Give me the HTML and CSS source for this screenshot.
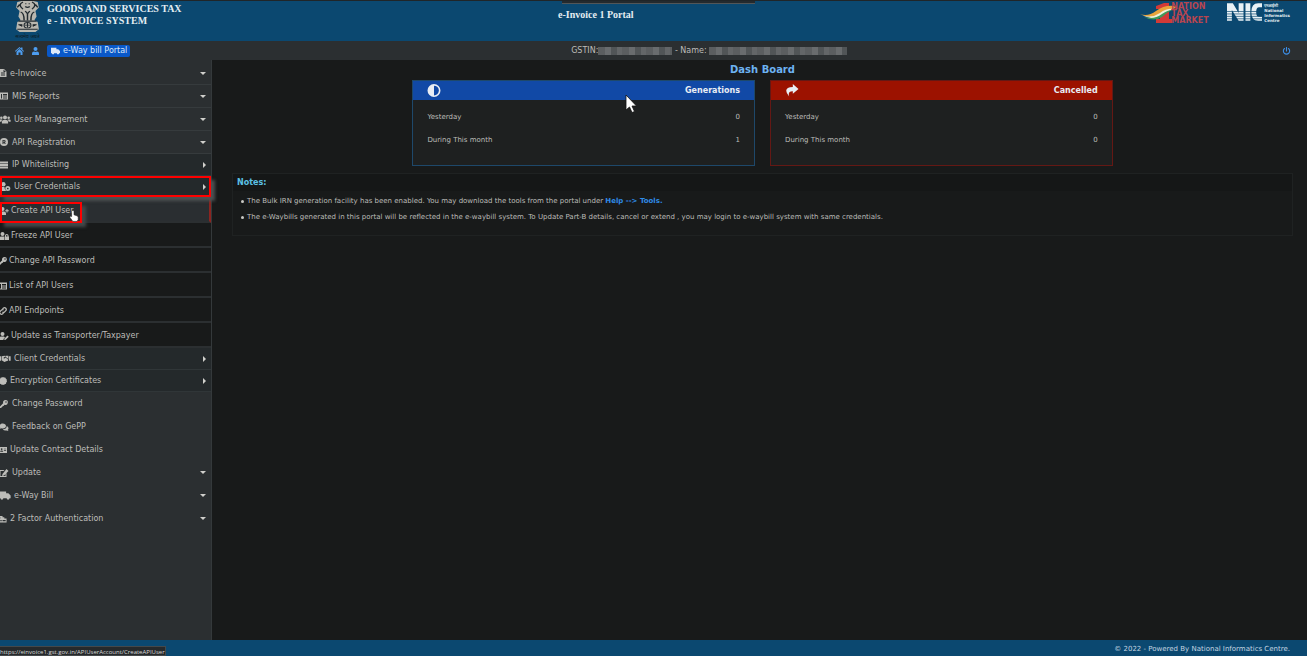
FILE: index.html
```html
<!DOCTYPE html>
<html lang="en">
<head>
    <meta charset="UTF-8">
    <meta name="viewport" content="width=device-width, initial-scale=1.0">
    <title>e-Invoice 1 Portal</title>
    <link rel="stylesheet" href="styles.css">
</head>
<body>
    <!-- icon set -->
    <svg class="icon-defs" aria-hidden="true">
        <symbol id="i-file" viewBox="0 0 16 16"><path fill-rule="evenodd" d="M1 0h9l5 5v11H1zM4 7v2h8V7zM4 11v2h8v-2zM9 1v5h5z"/></symbol>
        <symbol id="i-list" viewBox="0 0 16 16"><path fill-rule="evenodd" d="M0 1h16v14H0zM2 4v9h2V4zM6 4v2h8V4zM6 7v2h8V7zM6 11v2h8v-2z"/></symbol>
        <symbol id="i-users" viewBox="0 0 20 16"><circle cx="10" cy="4.500" r="3.500"/><circle cx="3.500" cy="5" r="2.300"/><circle cx="16.500" cy="5" r="2.300"/><path d="M4.500 15v-3q0-3 3-3h5q3 0 3 3v3zM0 12V9.500Q0 8 2 8h3.500Q3.500 10 3.500 12zM20 12V9.500Q20 8 18 8h-3.500q2 2 2 4z"/></symbol>
        <symbol id="i-reg" viewBox="0 0 16 16"><path fill-rule="evenodd" d="M8 0a8 8 0 1 1 0 16A8 8 0 0 1 8 0zM5 4v8h2V9.500h1L9.500 12h2L10 9q2-1 1-3.500Q10.500 4 8.500 4zM7 5.500h1.500q1.300 1.200 0 2.300H7z"/></symbol>
        <symbol id="i-server" viewBox="0 0 16 16"><path d="M0 1h16v4H0zM0 6h16v4H0zM0 11h16v4H0z"/></symbol>
        <symbol id="i-user-cog" viewBox="0 0 20 16"><circle cx="7" cy="4" r="4"/><path d="M0 16v-3q0-4 4-4h5q0 4 3 7z"/><path fill-rule="evenodd" d="M15 7a4.500 4.500 0 1 1 0 9 4.500 4.500 0 0 1 0-9zm0 3a1.500 1.500 0 1 0 0 3 1.500 1.500 0 0 0 0-3z"/></symbol>
        <symbol id="i-user-plus" viewBox="0 0 20 16"><circle cx="7" cy="4" r="4"/><path d="M0 16v-3q0-4 4-4h6q4 0 4 4v3zM15 4h2v2.500h2.500v2H17V11h-2V8.500h-2.500v-2H15z"/></symbol>
        <symbol id="i-user-lock" viewBox="0 0 20 16"><circle cx="7" cy="4" r="4"/><path d="M0 16v-3q0-4 4-4h6v7z"/><path fill-rule="evenodd" d="M11 9h1V7q0-3 3.500-3T19 7v2h1v7h-9zM14 9h3V7q-1.500-1.800-3 0z"/></symbol>
        <symbol id="i-key" viewBox="0 0 16 16"><path fill-rule="evenodd" d="M11 0a5 5 0 1 1-2 9.700L7 12H5v2H3v2H0v-3l6.300-6.300A5 5 0 0 1 11 0zm1 2.500a1.500 1.500 0 1 0 0 3 1.500 1.500 0 0 0 0-3z"/></symbol>
        <symbol id="i-link" viewBox="0 0 16 16"><g fill="none" stroke="currentColor" stroke-width="2.400"><path d="M7 4l2-2q2.500-1.500 4.500.5T14 7l-3 3q-2 1.500-4 0"/><path d="M9 12l-2 2q-2.500 1.500-4.500-.5T2 9l3-3q2-1.500 4 0"/></g></symbol>
        <symbol id="i-user-edit" viewBox="0 0 20 16"><circle cx="7" cy="4" r="4"/><path d="M0 16v-3q0-4 4-4h6l2 2-3 3v2zM11 13l6-6 2.500 2.500-6 6L10.500 16z"/></symbol>
        <symbol id="i-hands" viewBox="0 0 20 16"><path d="M0 4h3v8H0zM17 4h3v8h-3zM4 4l5-1 2 1-4 3q2 2 4-1l5 4-1 2-3 1-3 1-5-3zM11 3h5v6l-5-4z"/></symbol>
        <symbol id="i-cert" viewBox="0 0 16 16"><path d="M8 0l2 1 2.500 0 1 2.200L15.500 5v2.500L16 9l-1.500 2-.5 2.500-2.500.8L9.500 16 8 15l-2 1-1.700-1.700L2 13.500 1.500 11 0 9l.8-2L.5 4.700 2.700 3.200l1-2.200H6z"/></symbol>
        <symbol id="i-chat" viewBox="0 0 18 16"><path d="M6.500 1C10 1 13 3 13 6s-3 5-6.500 5Q5 11 3.500 10.500L0 12l1.500-3Q0 8 0 6c0-3 3-5 6.500-5zM14.500 6Q18 7.500 18 10.500q0 2-1.500 3L18 16l-4-1q-5 1-7.500-2.500Q14 12.500 14.500 6z"/></symbol>
        <symbol id="i-card" viewBox="0 0 18 16"><path fill-rule="evenodd" d="M0 1h18v14H0zM6 4a2 2 0 1 0 0 4 2 2 0 0 0 0-4zM2.500 12h7q0-3-3.500-3t-3.500 3zM11 5v1.500h5V5zM11 8v1.500h5V8z"/></symbol>
        <symbol id="i-edit" viewBox="0 0 18 16"><path d="M0 2h10L8 4H2v10h10v-4l2-2v8H0zM14 0l4 4-9 9-4 1 1-4z"/></symbol>
        <symbol id="i-truck" viewBox="0 0 20 16"><path d="M0 1h12v3h4l4 4v5h-2a2.500 2.500 0 0 1-5 0H7a2.500 2.500 0 0 1-5 0H0z"/></symbol>
        <symbol id="i-factor" viewBox="0 0 18 16"><path fill-rule="evenodd" d="M1 1h7v3h4v3h5v9H0V7h3V4H1zM3 10v3h3v-3zM8 10v3h7v-3z"/></symbol>
        <symbol id="i-home" viewBox="0 0 18 16"><path d="M9 0l3 2.700V1h3v4.300L18 8l-1 1.300-8-7-8 7L0 8zM9 4l6 5.300V16h-4v-5H7v5H3V9.300z"/></symbol>
        <symbol id="i-user" viewBox="0 0 16 16"><circle cx="8" cy="4" r="4"/><path d="M1 16v-3q0-4 4-4 3 1.500 6 0 4 0 4 4v3z"/></symbol>
        <symbol id="i-power" viewBox="0 0 16 16"><g fill="none" stroke="currentColor" stroke-width="2.200" stroke-linecap="round"><path d="M4 3a6.300 6.300 0 1 0 8 0M8 1v7"/></g></symbol>
        <symbol id="i-half" viewBox="0 0 16 16"><path fill-rule="evenodd" d="M8 0a8 8 0 1 1 0 16A8 8 0 0 1 8 0zm0 2v12A6 6 0 0 0 8 2z"/></symbol>
        <symbol id="i-share" viewBox="0 0 16 16"><path d="M9 0l7 6-7 6V8.800Q2.500 8.500 4.500 15.500-4.500 4.500 9 3.800z"/></symbol>
    </svg>

    <header class="topbar">
        <div class="window-tab"></div>
        <div class="brand">
            <div class="emblem">
                <svg viewBox="3 0 22 34" preserveAspectRatio="none" aria-hidden="true">
                    <path fill="#b9b7af" d="M5 1l4-1h10l4 1 1 6-3 4 1 6-2 4 3 2 1 8-3 3H7l-3-3 1-8 3-2-2-4 1-6-3-4z"/>
                    <path fill="none" stroke="#222b30" stroke-width="1.300" d="M10 1q-5 3 0 8M18 1q5 3 0 8M12 3h1M15 3h1M12 6q2 2 4 0M8 12q3 1 3 9M20 12q-3 1-3 9M12 11l2 3 2-3M14 14v7M6 22h16M5 31h18M7 4l-2 3M21 4l2 3"/>
                    <circle cx="14" cy="26.500" r="3" fill="none" stroke="#222b30"/>
                    <path stroke="#222b30" stroke-width="1" d="M14 24v5M11.500 26.500h5M6 26h3v2M19 28v-2h3"/>
                </svg>
                <span class="motto">सत्यमेव जयते</span>
            </div>
            <div class="brand-name">
                <div>GOODS AND SERVICES TAX</div>
                <div>e - INVOICE SYSTEM</div>
            </div>
        </div>
        <h1>e-Invoice 1 Portal</h1>
        <div class="logos">
            <div class="ntm">
                <svg viewBox="0 0 40 20" aria-hidden="true">
                    <path fill="#d23a37" d="M16 3l8-3h5v16h3v4H16v-4h4V6h-4z"/>
                    <path fill="#e9a43b" d="M0 11q8 3 16-3 8-6 18-5l3 2q-10 1-17 7-9 5-20-1z"/>
                    <path fill="#eef0dc" d="M2 12q9 4 18-2 7-5 14-4-7 2-13 7-9 5-19-1z"/>
                    <path fill="#3f9a58" d="M4 14q10 3 18-3 6-4 10-4-6 3-10 7-8 5-18 0z"/>
                </svg>
                <div class="ntm-text">NATION<br>TAX<br>MARKET</div>
            </div>
            <div class="nic">
                <svg viewBox="0 0 36 18" aria-hidden="true">
                    <path fill="#e9f1f5" d="M0 0h6l6 10V0h5v18h-5L5 7v11H0zM19 0h5v18h-5zM36 0v4h-3q-3 0-3 5t3 5h3v4h-4q-7 0-7-9t7-9z"/>
                    <path stroke="#0b4870" stroke-width="0.700" d="M0 8.500h36M0 11h36M0 13.500h36M0 16h36"/>
                </svg>
                <div class="nic-text"><span>एनआईसी</span><span>National</span><span>Informatics</span><span>Centre</span></div>
            </div>
        </div>
    </header>

    <nav class="toolbar">
        <div class="shortcuts">
            <a href="#" aria-label="Home"><svg class="ico"><use href="#i-home"/></svg></a>
            <a href="#" aria-label="User"><svg class="ico"><use href="#i-user"/></svg></a>
            <a href="#" class="portal-link"><svg class="ico"><use href="#i-truck"/></svg>e-Way bill Portal</a>
        </div>
        <div class="taxpayer">GSTIN:<span class="masked gstin"></span> - Name: <span class="masked name"></span></div>
        <a href="#" class="logout" aria-label="Logout"><svg class="ico"><use href="#i-power"/></svg></a>
    </nav>

    <div class="page">
        <aside>
            <ul class="menu">
                <li><a href="#" class="line down"><svg class="ico small"><use href="#i-file"/></svg>e-Invoice</a></li>
                <li><a href="#" class="line down"><svg class="ico medium"><use href="#i-list"/></svg>MIS Reports</a></li>
                <li><a href="#" class="line down"><svg class="ico large"><use href="#i-users"/></svg>User Management</a></li>
                <li><a href="#" class="line down"><svg class="ico medium"><use href="#i-reg"/></svg>API Registration</a></li>
                <li><a href="#" class="group right"><svg class="ico medium"><use href="#i-server"/></svg>IP Whitelisting</a></li>
                <li><a href="#" class="group right marked"><svg class="ico large"><use href="#i-user-cog"/></svg>User Credentials</a></li>
                <li><a href="#" class="sub current"><svg class="ico medium"><use href="#i-user-plus"/></svg>Create API User</a>
                    <svg class="hand" viewBox="0 0 16 20" aria-hidden="true"><path fill="#fff" stroke="#222" d="M5 1h2l1 1v6l6 2 1 2v4l-2 3H6L1 12l1-2 2 1V2z"/></svg>
                </li>
                <li><a href="#" class="sub"><svg class="ico medium"><use href="#i-user-lock"/></svg>Freeze API User</a></li>
                <li><a href="#" class="sub"><svg class="ico small"><use href="#i-key"/></svg>Change API Password</a></li>
                <li><a href="#" class="sub"><svg class="ico small"><use href="#i-list"/></svg>List of API Users</a></li>
                <li><a href="#" class="sub"><svg class="ico small"><use href="#i-link"/></svg>API Endpoints</a></li>
                <li><a href="#" class="sub"><svg class="ico medium"><use href="#i-user-edit"/></svg>Update as Transporter/Taxpayer</a></li>
                <li><a href="#" class="group right"><svg class="ico large"><use href="#i-hands"/></svg>Client Credentials</a></li>
                <li><a href="#" class="group right"><svg class="ico small"><use href="#i-cert"/></svg>Encryption Certificates</a></li>
                <li><a href="#"><svg class="ico medium"><use href="#i-key"/></svg>Change Password</a></li>
                <li><a href="#"><svg class="ico medium"><use href="#i-chat"/></svg>Feedback on GePP</a></li>
                <li><a href="#"><svg class="ico small"><use href="#i-card"/></svg>Update Contact Details</a></li>
                <li><a href="#" class="down"><svg class="ico medium"><use href="#i-edit"/></svg>Update</a></li>
                <li><a href="#" class="down"><svg class="ico large"><use href="#i-truck"/></svg>e-Way Bill</a></li>
                <li><a href="#" class="down"><svg class="ico small"><use href="#i-factor"/></svg>2 Factor Authentication</a></li>
            </ul>
        </aside>

        <main>
            <h2>Dash Board</h2>
            <div class="cards">
                <section class="card generations">
                    <h3><svg class="ico"><use href="#i-half"/></svg>Generations</h3>
                    <dl>
                        <div><dt>Yesterday</dt><dd>0</dd></div>
                        <div><dt>During This month</dt><dd>1</dd></div>
                    </dl>
                    <svg class="pointer" viewBox="0 0 12 19" aria-hidden="true"><path fill="#fff" stroke="#111" stroke-width="0.800" d="M1 1v15l3.500-3L7 18.500l2.500-1L7 12h4.500z"/></svg>
                </section>
                <section class="card cancelled">
                    <h3><svg class="ico"><use href="#i-share"/></svg>Cancelled</h3>
                    <dl>
                        <div><dt>Yesterday</dt><dd>0</dd></div>
                        <div><dt>During This month</dt><dd>0</dd></div>
                    </dl>
                </section>
            </div>
            <section class="notes">
                <h3>Notes:</h3>
                <ul>
                    <li>The Bulk IRN generation facility has been enabled. You may download the tools from the portal under <a href="#">Help --&gt; Tools.</a></li>
                    <li>The e-Waybills generated in this portal will be reflected in the e-waybill system. To Update Part-B details, cancel or extend , you may login to e-waybill system with same credentials.</li>
                </ul>
            </section>
        </main>
    </div>

    <footer>© 2022 - Powered By National Informatics Centre.</footer>
    <div class="link-status">https://einvoice1.gst.gov.in/APIUserAccount/CreateAPIUser</div>
</body>
</html>
```

FILE: styles.css
```css
*, *::before, *::after {
    box-sizing: border-box;
}
body {
    margin: 0;
    min-height: 100vh;
    display: flex;
    flex-direction: column;
    font-family: "DejaVu Sans", Verdana, sans-serif;
    font-size: 8px;
    color: #bdbdb9;
    background-color: #181a1a;
}
a {
    color: inherit;
    text-decoration: none;
}
h1, h2, h3, ul, dl, dd {
    margin: 0;
    padding: 0;
}
.icon-defs {
    position: absolute;
    width: 0;
    height: 0;
}
.ico {
    width: 9px;
    height: 8px;
    fill: currentColor;
    flex: none;
}

/* header */
.topbar {
    position: relative;
    display: flex;
    height: 41px;
    background-color: #0b4870;
    border-top: 1px solid #202528;
    color: #e4edf2;
    font-family: "Liberation Serif", "Times New Roman", serif;
    font-weight: bold;
}
.window-tab {
    position: absolute;
    top: 0;
    left: 43%;
    width: 193px;
    height: 3px;
    background-color: #242a2e;
    border-bottom: 1px solid #525658;
}
.brand {
    display: flex;
    gap: 6px;
    width: 42.7%;
    padding-left: 14px;
}
.emblem {
    display: flex;
    flex-direction: column;
    align-items: center;
    width: 27px;
}
.emblem svg {
    width: 25px;
    height: 31px;
}
.motto {
    font: 5px/8px "Noto Sans", sans-serif;
    color: #101a20;
    white-space: nowrap;
}
.brand-name {
    font-size: 10px;
    line-height: 12px;
    padding-top: 2px;
}
h1 {
    font-size: 10px;
    line-height: 12px;
    padding-top: 8px;
}
.logos {
    display: flex;
    gap: 8px;
    margin-left: auto;
    padding: 2px 17px 0 0;
}
.ntm, .nic {
    display: flex;
    height: 20px;
}
.ntm svg {
    width: 40px;
    height: 20px;
    margin-right: -9px;
}
.ntm-text {
    width: 48px;
    font: bold 8px/7px "DejaVu Sans", sans-serif;
    color: #b8454f;
}
.nic {
    gap: 2px;
}
.nic svg {
    width: 35px;
    height: 18px;
}
.nic-text {
    display: flex;
    flex-direction: column;
    font: bold 4px/5px "DejaVu Sans", sans-serif;
}

/* toolbar */
.toolbar {
    display: flex;
    align-items: center;
    height: 19px;
    background-color: #2b2f31;
}
.shortcuts {
    display: flex;
    align-items: center;
    gap: 7px;
    width: 43.7%;
    padding-left: 15px;
    color: #4d9df0;
}
.shortcuts a {
    display: flex;
    align-items: center;
}
.shortcuts .portal-link {
    gap: 3px;
    height: 12px;
    padding: 0 3px 0 4px;
    border-radius: 2px;
    background-color: #0a58c8;
    color: #dce8f8;
}
.taxpayer {
    display: flex;
    align-items: center;
    white-space: pre;
}
.masked {
    height: 8px;
    background: repeating-linear-gradient(90deg, #5b5e60 0 7px, #696c6e 7px 13px, #515557 13px 19px, #636668 19px 24px);
}
.gstin {
    width: 74px;
}
.name {
    width: 138px;
}
.logout {
    display: flex;
    margin-left: auto;
    padding-right: 16px;
    color: #3c8fe8;
}

/* side menu */
.page {
    flex: 1;
    display: flex;
}
aside {
    width: 212px;
    flex: none;
    padding-top: 2px;
    background-color: #2b2f31;
    border-right: 1px solid #34393b;
}
.menu {
    list-style: none;
}
.menu li {
    position: relative;
}
.menu a {
    position: relative;
    display: flex;
    align-items: center;
    gap: 3px;
    height: 23px;
    padding: 0 5px 0 0;
}
.menu .ico {
    margin-left: -1px;
}
.menu .small {
    width: 8px;
}
.menu .medium {
    width: 10px;
}
.menu .large {
    width: 12px;
    height: 9px;
}
.menu .line {
    border-bottom: 1px solid #363b3d;
}
.menu .group {
    height: 22px;
    background-color: #24292b;
    border-bottom: 1px solid #303638;
}
.menu .sub {
    height: 25px;
    gap: 2px;
    padding-top: 2px;
    background-color: #181a1a;
    border-bottom: 2px solid #2b2f31;
}
.menu .current {
    background-color: #2a2e31;
    border-right: 2px solid #8c2420;
}
.down::after, .right::after {
    content: "";
    margin-left: auto;
    border: 3px solid transparent;
}
.menu .down::after {
    border-top-color: #d0d0cc;
    border-bottom: 0;
}
.menu .right::after {
    border-left-color: #d0d0cc;
    border-right: 0;
}
/* red callouts */
.marked::before, .current::before {
    content: "";
    position: absolute;
    z-index: 1;
    border: 2px solid #f00;
}
.marked::before {
    inset: 0;
    box-shadow: 4px 4px 3px #4c5051;
}
.current::before {
    top: 4px;
    bottom: -2px;
    left: 0;
    width: 82px;
    box-shadow: 4px 4px 3px #43484a;
}
.hand {
    position: absolute;
    z-index: 2;
    top: 12px;
    left: 69px;
    width: 10px;
    height: 12px;
}

/* dashboard */
main {
    flex: 1;
    padding: 0 14px 0 20px;
}
h2 {
    font-size: 10px;
    line-height: 20px;
    text-align: center;
    color: #6db3f2;
}
.cards {
    display: grid;
    grid-template-columns: 1fr 1fr;
    gap: 15px;
    width: 66%;
    margin: 0 auto;
}
.card {
    position: relative;
    height: 86px;
    border: 1px solid #1e486a;
    background-color: #1e2020;
}
.card h3 {
    display: flex;
    align-items: center;
    justify-content: space-between;
    height: 19px;
    padding: 0 14px;
    font-size: 8px;
    color: #e8edf4;
    background-color: #1149a6;
}
.card h3 .ico {
    width: 14px;
    height: 13px;
}
.card dl {
    padding: 6px 14px;
    font-size: 7px;
}
.card dl div {
    display: flex;
    justify-content: space-between;
    line-height: 23px;
}
.cancelled {
    border-color: #641814;
}
.cancelled h3 {
    background-color: #9c1200;
}
.pointer {
    position: absolute;
    top: 13px;
    left: 62%;
    width: 12px;
    height: 19px;
}
.notes {
    margin-top: 7px;
    padding-bottom: 10px;
    border: 1px solid #1f2222;
}
.notes h3 {
    padding-left: 4px;
    font-size: 8px;
    line-height: 17px;
    color: #5cc0e4;
    background-color: #151717;
}
.notes ul {
    padding: 2px 0 0 14px;
    font-size: 7px;
    list-style: none;
}
.notes li {
    line-height: 16px;
}
.notes li::before {
    content: "";
    float: left;
    width: 3px;
    height: 3px;
    margin: 7px 0 0 -6px;
    border-radius: 2px;
    background-color: #c8c8c4;
}
.notes a {
    font-weight: bold;
    color: #2f8be6;
}

footer {
    height: 16px;
    padding: 0 17px;
    font-size: 7px;
    line-height: 18px;
    text-align: right;
    color: #c3d5e0;
    background-color: #0b4870;
}
.link-status {
    position: fixed;
    left: 0;
    bottom: 0;
    height: 10px;
    font: 6px/10px "Open Sans", sans-serif;
    color: #d8d8d8;
    background-color: #26292b;
    border: 1px solid #44484a;
    border-left: 0;
}
```
